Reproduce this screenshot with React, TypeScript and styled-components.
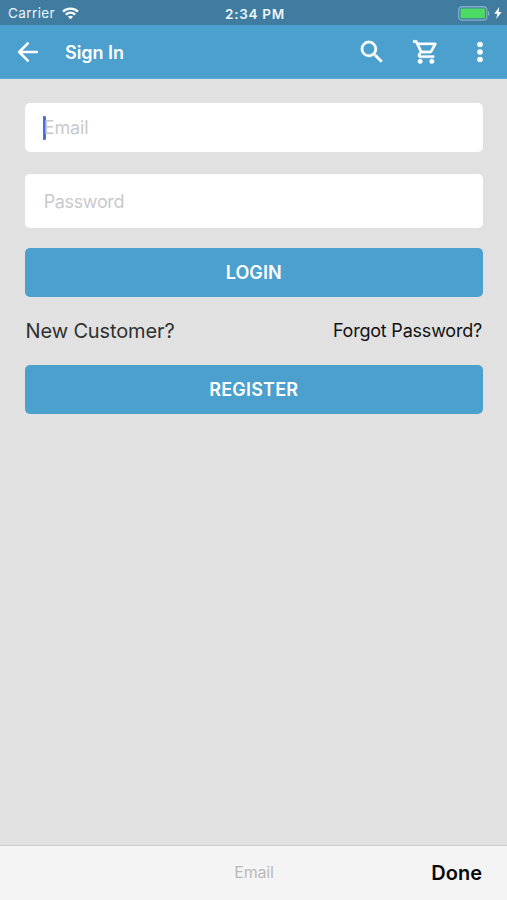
import React from "react";
import styled, { createGlobalStyle } from "styled-components";

const GlobalStyle = createGlobalStyle`
  * { box-sizing: border-box; }
  body { margin: 0; background: #e1e1e1; }
  button { font-family: inherit; }
`;

const Screen = styled.main`
  width: 507px;
  height: 900px;
  display: flex;
  flex-direction: column;
  overflow: hidden;
  background: #e1e1e1;
  font-family: Inter, "Liberation Sans", sans-serif;
`;

const StatusBar = styled.div`
  height: 25px;
  flex: none;
  display: grid;
  grid-template-columns: 1fr auto 1fr;
  align-items: center;
  padding: 3px 5px 0 8px;
  background: #3f7ca0;
  color: #edf6fb;
`;

const Group = styled.div<{ $end?: boolean }>`
  display: flex;
  align-items: center;
  gap: ${(p) => (p.$end ? "4px" : "7px")};
  justify-content: ${(p) => (p.$end ? "flex-end" : "flex-start")};
  padding-bottom: ${(p) => (p.$end ? "2px" : "1px")};
`;

const Label = styled.span<{
  $size: number;
  $weight?: number;
  $color?: string;
  $spacing?: number;
}>`
  font-size: ${(p) => p.$size}px;
  font-weight: ${(p) => p.$weight ?? 400};
  color: ${(p) => p.$color ?? "inherit"};
  letter-spacing: ${(p) => p.$spacing ?? 0}px;
  line-height: 1.2;
  white-space: nowrap;
`;

const NavBar = styled.header`
  height: 54px;
  flex: none;
  display: flex;
  align-items: center;
  padding: 1px 12px 0 13px;
  background: #4ca0ce;
  border-bottom: 1px solid #5ca9d2;
  color: #fff;
`;

const IconButton = styled.button`
  border: 0;
  padding: 0;
  background: none;
  color: inherit;
  display: flex;
`;

const Title = styled.h1`
  margin: 0 auto 0 22px;
  padding-top: 1px;
  font-size: 18px;
  font-weight: 600;
  line-height: 22px;
  letter-spacing: -0.05px;
`;

const Actions = styled.div`
  display: flex;
  align-items: center;
  gap: 25px;
`;

const Form = styled.form`
  flex: 1;
  display: flex;
  flex-direction: column;
  padding: 24px 24.5px 0 25px;
`;

const Field = styled.div<{ $height: number }>`
  height: ${(p) => p.$height}px;
  display: flex;
  align-items: center;
  padding: 1px 0 0 18px;
  background: #fff;
  border-radius: 5px;
`;

const Caret = styled.span`
  width: 3px;
  height: 24px;
  margin-right: -3px;
  border-radius: 1px;
  background: #4a6be3;
`;

const FieldText = styled.span<{ $spacing: number }>`
  padding-left: 0.7px;
  font-size: 18px;
  line-height: 22px;
  letter-spacing: ${(p) => p.$spacing}px;
  color: #c9c9cc;
`;

const Button = styled.button`
  height: 49px;
  flex: none;
  border: 0;
  padding: 0;
  border-radius: 5px;
  background: #4ca0ce;
  color: #fff;
`;

const LinkRow = styled.div`
  height: 68px;
  display: flex;
  align-items: center;
  justify-content: space-between;
  padding: 0 0.5px;
`;

const FieldGap = styled.div<{ $height: number }>`
  height: ${(p) => p.$height}px;
`;

const Accessory = styled.footer`
  height: 55px;
  flex: none;
  display: grid;
  grid-template-columns: 1fr auto 1fr;
  align-items: center;
  padding: 0 25px 0 26px;
  background: #f4f4f4;
  border-top: 1px solid #cfcfcf;
`;

const Done = styled.div`
  justify-self: end;
  display: flex;
`;

const Wifi = () => (
  <svg width="17" height="13" viewBox="0 0 17 13" fill="none" stroke="#f5fbff" strokeWidth="2.3">
    <path d="M1 4.6C5.2.7 11.8.7 16 4.6" />
    <path d="M3.8 7.6c2.7-2.5 6.7-2.5 9.4 0" />
    <path d="M8.5 12.3 5.9 9.7c1.5-1.3 3.7-1.3 5.2 0Z" fill="#f5fbff" stroke="none" />
  </svg>
);

const Battery = () => (
  <svg width="32" height="15" viewBox="0 0 32 15">
    <rect x=".75" y=".75" width="28" height="13.3" rx="3" fill="none" stroke="#84adc6" strokeWidth="1.3" />
    <rect x="2.5" y="2.5" width="24.5" height="9.8" rx="1" fill="#4cd964" />
    <path d="M30 5.2c2 .7 2 3.8 0 4.5Z" fill="#84adc6" />
  </svg>
);

const Bolt = () => (
  <svg width="8" height="12" viewBox="0 0 8 12" fill="#fff">
    <path d="M5.3 0 .3 6.7h3L2.2 12l5.5-7H4.6Z" />
  </svg>
);

const Back = () => (
  <svg width="30" height="30" viewBox="0 0 30 30" fill="none" stroke="currentColor" strokeWidth="2.6" strokeLinecap="round" strokeLinejoin="round">
    <path d="M23.8 15H6.5M14.8 6.4 6.2 15l8.6 8.6" />
  </svg>
);

const Search = () => (
  <svg width="30" height="30" viewBox="0 0 24 24" fill="currentColor">
    <path d="M15.5 14h-.79l-.28-.27A6.47 6.47 0 0 0 16 9.5 6.5 6.5 0 1 0 9.5 16c1.61 0 3.09-.59 4.23-1.57l.27.28v.79l5 4.99L20.49 19l-4.99-5zm-6 0C7.01 14 5 11.99 5 9.5S7.01 5 9.5 5 14 7.01 14 9.5 11.99 14 9.5 14z" stroke="currentColor" strokeWidth=".25" />
  </svg>
);

const Cart = () => (
  <svg width="28" height="28" viewBox="0 0 24 24" fill="currentColor">
    <path d="M15.55 13c.75 0 1.41-.41 1.75-1.03l3.58-6.49A.996.996 0 0 0 20.01 4H5.21l-.94-2H1v2h2l3.6 7.59-1.35 2.44C4.52 15.37 5.48 17 7 17h12v-2H7l1.1-2h7.45zM6.16 6h12.15l-2.76 5H8.53L6.16 6zM7 18c-1.1 0-1.99.9-1.99 2S5.9 22 7 22s2-.9 2-2-.9-2-2-2zm10 0c-1.1 0-1.99.9-1.99 2s.89 2 1.99 2 2-.9 2-2-.9-2-2-2z" stroke="currentColor" strokeWidth=".3" />
  </svg>
);

const More = () => (
  <svg width="30" height="30" viewBox="0 0 30 30" fill="currentColor">
    <circle cx="15" cy="7.5" r="2.8" />
    <circle cx="15" cy="15" r="2.8" />
    <circle cx="15" cy="22.5" r="2.8" />
  </svg>
);

export default function App() {
  return (
    <>
      <GlobalStyle />
      <Screen>
        <StatusBar>
          <Group>
            <Label $size={13.5} $spacing={0.4}>Carrier</Label>
            <Wifi />
          </Group>
          <Label $size={13.5} $weight={600} $spacing={0.7}>2:34 PM</Label>
          <Group $end>
            <Battery />
            <Bolt />
          </Group>
        </StatusBar>
        <NavBar>
          <IconButton type="button" aria-label="Back"><Back /></IconButton>
          <Title>Sign In</Title>
          <Actions>
            <IconButton type="button" aria-label="Search"><Search /></IconButton>
            <IconButton type="button" aria-label="Cart"><Cart /></IconButton>
            <IconButton type="button" aria-label="More"><More /></IconButton>
          </Actions>
        </NavBar>
        <Form>
          <Field $height={49}>
            <Caret />
            <FieldText $spacing={-0.1}>Email</FieldText>
          </Field>
          <FieldGap $height={22} />
          <Field $height={54}>
            <FieldText $spacing={-0.36}>Password</FieldText>
          </Field>
          <FieldGap $height={20} />
          <Button type="button">
            <Label $size={18} $weight={600} $spacing={0.1}>LOGIN</Label>
          </Button>
          <LinkRow>
            <Label $size={20} $color="#303030" $spacing={-0.12}>New Customer?</Label>
            <Label $size={18} $color="#111" $spacing={-0.21}>Forgot Password?</Label>
          </LinkRow>
          <Button type="button">
            <Label $size={18} $weight={600} $spacing={0.2}>REGISTER</Label>
          </Button>
        </Form>
        <Accessory>
          <span />
          <Label $size={16} $color="#b9b9b9" $spacing={-0.2}>Email</Label>
          <Done>
            <Label $size={20} $weight={600} $color="#080808">Done</Label>
          </Done>
        </Accessory>
      </Screen>
    </>
  );
}
